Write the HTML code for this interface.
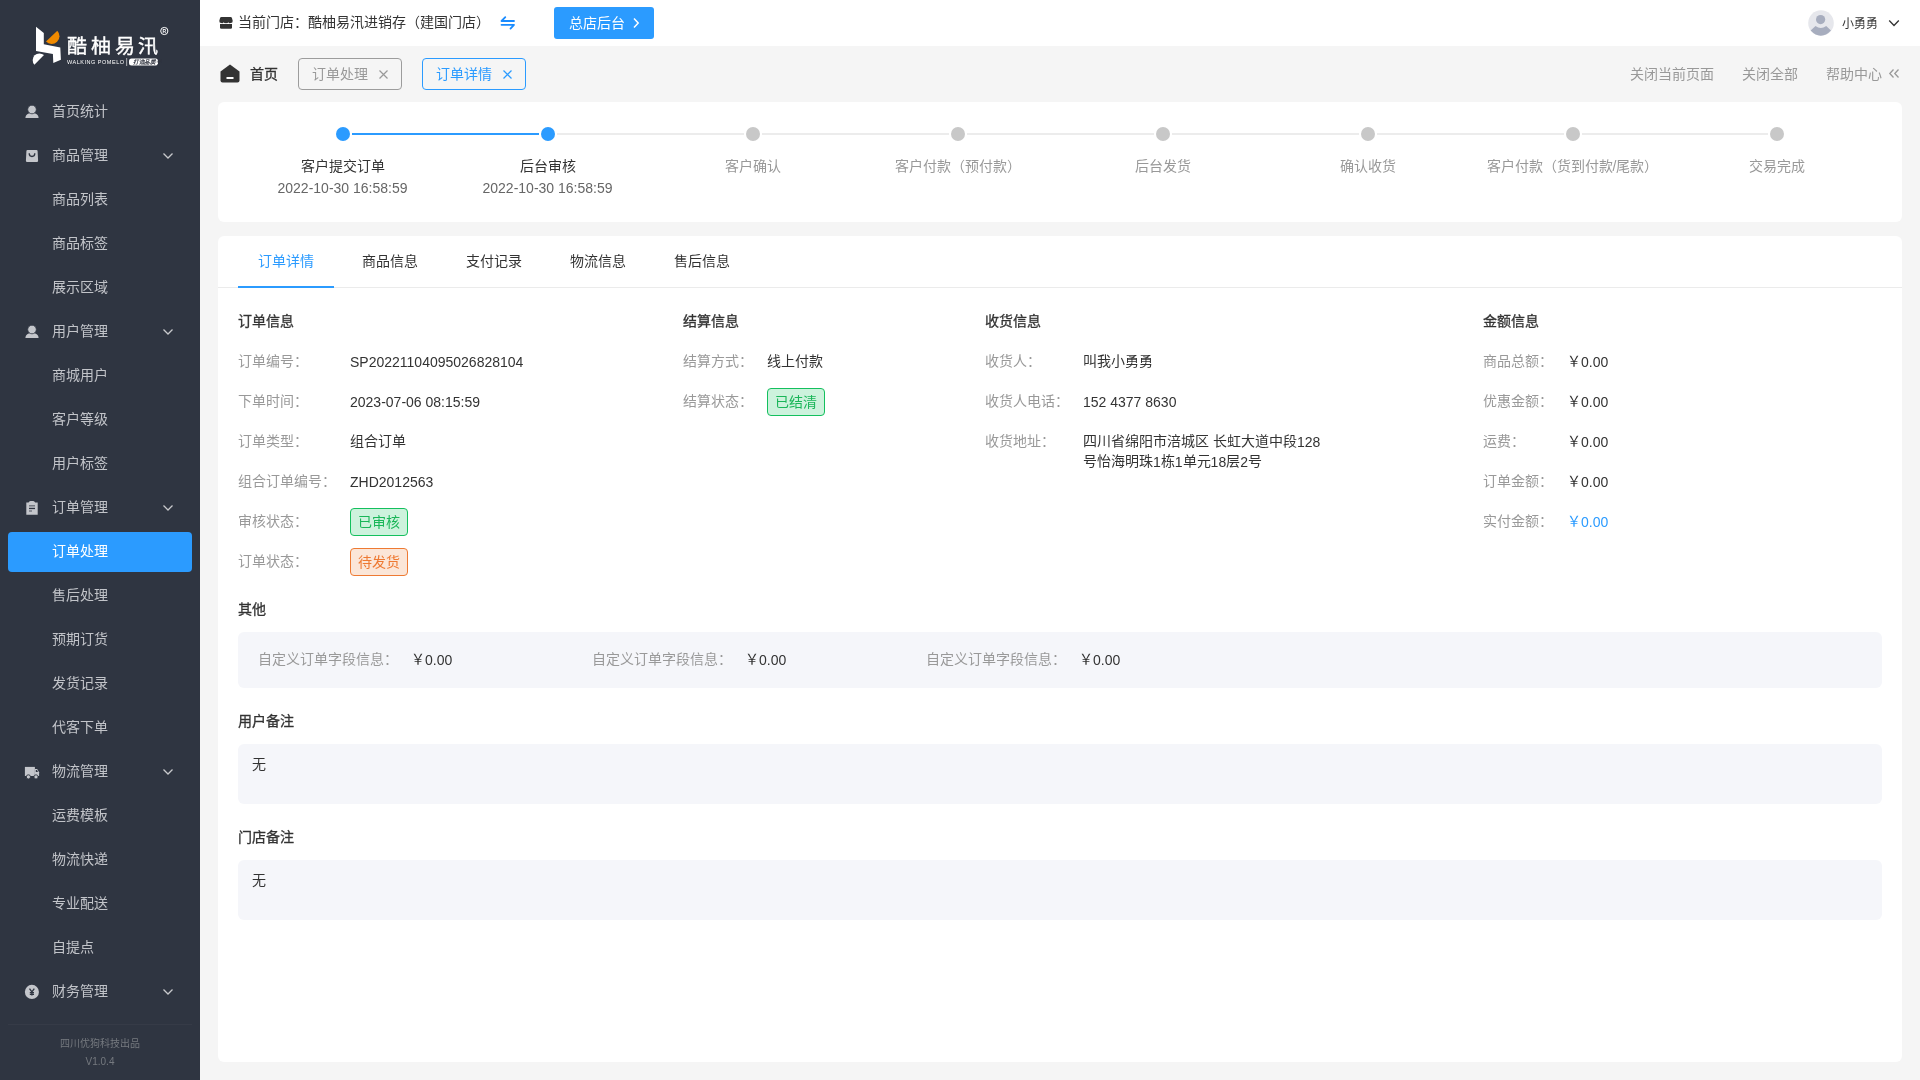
<!DOCTYPE html>
<html lang="zh-CN">
<head>
<meta charset="utf-8">
<style>
*{box-sizing:border-box;margin:0;padding:0}
html,body{width:1920px;height:1080px;overflow:hidden;background:#f5f5f5;font-family:"Liberation Sans",sans-serif;font-size:14px;color:#333}
.abs{position:absolute}
#root{position:absolute;left:0;top:0;width:1920px;height:1080px;will-change:transform}
#side{position:absolute;left:0;top:0;width:200px;height:1080px;background:#2f3541}
.mi{position:absolute;left:52px;height:20px;line-height:20px;font-size:14px;color:#c2c4c9;white-space:nowrap}
.ico{position:absolute;left:25px;width:14px;height:14px}
.chev{position:absolute;left:162px;width:12px;height:8px}
#hdr{position:absolute;left:200px;top:0;width:1720px;height:46px;background:#fff}
.t{position:absolute;white-space:nowrap;line-height:20px;height:20px}
.card{position:absolute;background:#fff;border-radius:6px}
.lab{color:#999}
.val{color:#333}
.n{position:relative;top:1px}
.sec{font-weight:400;color:#333;-webkit-text-stroke:0.3px #333}
.badge{position:absolute;height:28px;line-height:26px;border-radius:4px;font-size:14px;text-align:center}
.gbox{position:absolute;background:#f5f6f9;border-radius:4px;left:20px;width:1644px}
</style>
</head>
<body>
<div id="root">
<div id="side">
<svg class="abs" style="left:0;top:0" width="200" height="80" viewBox="0 0 200 80">
<path d="M36 26.7 L43.8 32.9 L43.8 44.2 L60.3 47.4 L60.9 59.8 L53.3 62.9 L52.9 54 L36 50.9 Z" fill="#fff"/>
<path d="M46 41.6 L57.3 30.7 A7.85 7.85 0 0 1 46 41.6 Z" fill="#f08a00"/>
<path d="M44 55.1 L34.4 64.7 A6.8 6.8 0 0 1 44 55.1 Z" fill="#fff"/>
<circle cx="164.3" cy="31" r="3.6" fill="none" stroke="#fff" stroke-width="1"/>
<text x="162.6" y="33.2" font-size="5" fill="#fff" font-family="Liberation Sans" font-weight="bold">R</text>
<rect x="129" y="58.5" width="29" height="7" rx="2.5" fill="#fff"/>
<rect x="126.5" y="58" width="0.6" height="8" fill="#fff"/>
</svg>
<div class="abs" style="left:67px;top:31px;font-size:20px;line-height:30px;color:#fff;letter-spacing:3.8px;-webkit-text-stroke:0.4px #fff;transform:scaleY(0.94);transform-origin:0 15px;white-space:nowrap">酷柚易汛</div>
<div class="abs" style="left:67px;top:58px;font-size:5.5px;line-height:8px;color:#fff;letter-spacing:0.52px;white-space:nowrap">WALKING POMELO</div>
<div class="abs" style="left:133px;top:58px;font-size:5.5px;line-height:8px;color:#30343f;font-style:italic;letter-spacing:-0.3px;white-space:nowrap;-webkit-text-stroke:0.2px #30343f">打造品质子</div>
<div class="abs" style="left:8px;top:1024px;width:184px;height:1px;background:#363b47"></div>
<div class="abs" style="left:0;top:1037px;width:200px;text-align:center;font-size:10px;line-height:14px;color:#75797f">四川优狗科技出品</div>
<div class="abs" style="left:0;top:1055px;width:200px;text-align:center;font-size:10px;line-height:14px;color:#75797f">V1.0.4</div>
<svg class="ico" style="top:103px;left:24px;width:16px;height:16px" viewBox="0 0 16 16"><path d="M1.4 15 C1.6 11.8 4 10 8 10 C12 10 14.4 11.8 14.6 15 Z" fill="#c4c6cb"/><circle cx="8" cy="6.5" r="4.3" fill="#c4c6cb" stroke="#2f3541" stroke-width="0.8"/></svg>
<div class="mi" style="top:101px">首页统计</div>
<svg class="ico" style="top:147px;left:24px;width:16px;height:16px" viewBox="0 0 16 16"><path d="M3.6 3 H12.4 A1.2 1.2 0 0 1 13.6 4.1 L14.1 13.8 A1.2 1.2 0 0 1 12.9 15 H3.1 A1.2 1.2 0 0 1 1.9 13.8 L2.4 4.1 A1.2 1.2 0 0 1 3.6 3 Z" fill="#c4c6cb"/><path d="M5.2 6.3 A2.8 3.2 0 0 0 10.8 6.3" stroke="#2f3541" stroke-width="1.3" fill="none"/></svg>
<div class="mi" style="top:145px">商品管理</div>
<svg class="chev" style="top:152px" viewBox="0 0 12 8"><path d="M1.5 1.5 L6 6 L10.5 1.5" stroke="#c8c9cc" stroke-width="1.3" fill="none"/></svg>
<div class="mi" style="top:189px">商品列表</div>
<div class="mi" style="top:233px">商品标签</div>
<div class="mi" style="top:277px">展示区域</div>
<svg class="ico" style="top:323px;left:24px;width:16px;height:16px" viewBox="0 0 16 16"><path d="M1.4 15 C1.6 11.8 4 10 8 10 C12 10 14.4 11.8 14.6 15 Z" fill="#c4c6cb"/><circle cx="8" cy="6.5" r="4.3" fill="#c4c6cb" stroke="#2f3541" stroke-width="0.8"/></svg>
<div class="mi" style="top:321px">用户管理</div>
<svg class="chev" style="top:328px" viewBox="0 0 12 8"><path d="M1.5 1.5 L6 6 L10.5 1.5" stroke="#c8c9cc" stroke-width="1.3" fill="none"/></svg>
<div class="mi" style="top:365px">商城用户</div>
<div class="mi" style="top:409px">客户等级</div>
<div class="mi" style="top:453px">用户标签</div>
<svg class="ico" style="top:499px;left:24px;width:16px;height:16px" viewBox="0 0 16 16"><path d="M2.3 3.6 H4.6 Q5.1 2.1 6.5 2.1 H9.2 Q10.6 2.1 11.1 3.6 H13.7 V15.7 H2.3 Z" fill="#c4c6cb"/><rect x="5" y="6.1" width="6" height="1.4" fill="#6f737c"/><rect x="5" y="8.8" width="6" height="1.3" fill="#2f3541"/><rect x="5" y="11.3" width="3" height="1.4" fill="#6f737c"/></svg>
<div class="mi" style="top:497px">订单管理</div>
<svg class="chev" style="top:504px" viewBox="0 0 12 8"><path d="M1.5 1.5 L6 6 L10.5 1.5" stroke="#c8c9cc" stroke-width="1.3" fill="none"/></svg>
<div class="abs" style="left:8px;top:532px;width:184px;height:40px;background:#2b9bff;border-radius:4px"></div>
<div class="mi" style="top:541px;color:#fff">订单处理</div>
<div class="mi" style="top:585px">售后处理</div>
<div class="mi" style="top:629px">预期订货</div>
<div class="mi" style="top:673px">发货记录</div>
<div class="mi" style="top:717px">代客下单</div>
<svg class="ico" style="top:763px;left:24px;width:16px;height:16px" viewBox="0 0 16 16"><path d="M0.9 3.9 H10.9 V13 H0.9 Z" fill="#c4c6cb"/><path d="M11 6.1 H13.2 L15.1 9.2 V13 H11 Z" fill="#c4c6cb"/><path d="M11.8 7.1 H13 L14 9 H11.8 Z" fill="#2f3541"/><circle cx="4.4" cy="13.9" r="2.1" fill="#c4c6cb" stroke="#2f3541" stroke-width="0.9"/><circle cx="12" cy="13.9" r="2.1" fill="#c4c6cb" stroke="#2f3541" stroke-width="0.9"/></svg>
<div class="mi" style="top:761px">物流管理</div>
<svg class="chev" style="top:768px" viewBox="0 0 12 8"><path d="M1.5 1.5 L6 6 L10.5 1.5" stroke="#c8c9cc" stroke-width="1.3" fill="none"/></svg>
<div class="mi" style="top:805px">运费模板</div>
<div class="mi" style="top:849px">物流快递</div>
<div class="mi" style="top:893px">专业配送</div>
<div class="mi" style="top:937px">自提点</div>
<svg class="ico" style="top:983px;left:24px;width:16px;height:16px" viewBox="0 0 16 16"><circle cx="7.9" cy="8.9" r="7.05" fill="#c4c6cb"/><path d="M5.5 5.6 L7.9 8.9 L10.3 5.6 M7.9 8.9 V12.6 M5.8 9.7 H10 M5.8 11.3 H10" stroke="#2f3541" stroke-width="1.3" fill="none"/></svg>
<div class="mi" style="top:981px">财务管理</div>
<svg class="chev" style="top:988px" viewBox="0 0 12 8"><path d="M1.5 1.5 L6 6 L10.5 1.5" stroke="#c8c9cc" stroke-width="1.3" fill="none"/></svg>
</div>
<div id="hdr">
<svg class="abs" style="left:19px;top:16px" width="14" height="14" viewBox="0 0 14 14"><path d="M2.5 1 H11.5 A1.5 1.5 0 0 1 13 2.2 L13.7 4.8 A2 2 0 0 1 11.6 7 A1.9 1.9 0 0 1 9.3 6.2 A2 2 0 0 1 7 7 A2 2 0 0 1 4.7 6.2 A1.9 1.9 0 0 1 2.4 7 A2 2 0 0 1 0.3 4.8 L1 2.2 A1.5 1.5 0 0 1 2.5 1 Z" fill="#333"/><path d="M1 8 H13 V11.5 A1.3 1.3 0 0 1 11.7 12.8 H2.3 A1.3 1.3 0 0 1 1 11.5 Z" fill="#333"/></svg>
<div class="t" style="left:38px;top:12px;color:#333">当前门店：酷柚易汛进销存（建国门店）</div>
<svg class="abs" style="left:298px;top:14px" width="18" height="17" viewBox="0 0 18 17"><path d="M16 7 H3.5 L7.3 3.2" stroke="#1a8cff" stroke-width="1.8" stroke-linecap="round" stroke-linejoin="round" fill="none"/><path d="M3.5 10.8 H16 L12.5 14.6" stroke="#1a8cff" stroke-width="1.8" stroke-linecap="round" stroke-linejoin="round" fill="none"/></svg>
<div class="abs" style="left:354px;top:7px;width:100px;height:32px;background:#2b9bff;border-radius:3px"></div>
<div class="t" style="left:369px;top:13px;color:#fff">总店后台</div>
<svg class="abs" style="left:432px;top:17px" width="8" height="12" viewBox="0 0 8 12"><path d="M2 1.5 L6.2 6 L2 10.5" stroke="#fff" stroke-width="1.5" fill="none"/></svg>
<svg class="abs" style="left:1608px;top:10px" width="26" height="26" viewBox="0 0 26 26"><circle cx="13" cy="13" r="12.8" fill="#e6e7ec"/><circle cx="12.6" cy="9.6" r="4.6" fill="#a7adbe"/><path d="M2.6 20.5 L7.5 16 Q12.8 20 18.2 16 L23 20.5 Q18 25.7 12.8 25.7 Q7.6 25.7 2.6 20.5 Z" fill="#a7adbe"/></svg>
<div class="t" style="left:1642px;top:14px;font-size:12px;color:#333">小勇勇</div>
<svg class="abs" style="left:1688px;top:19px" width="12" height="9" viewBox="0 0 12 9"><path d="M1.2 1.5 L6 6.5 L10.8 1.5" stroke="#333" stroke-width="1.3" fill="none"/></svg>
</div>
<svg class="abs" style="left:220px;top:64px" width="20" height="19" viewBox="0 0 20 19"><path d="M10 0.5 L19.5 7.5 V16.5 A2 2 0 0 1 17.5 18.5 H2.5 A2 2 0 0 1 0.5 16.5 V7.5 Z" fill="#333"/><rect x="6.5" y="13" width="7" height="2" fill="#fff"/></svg>
<div class="t" style="left:250px;top:64px;color:#333;-webkit-text-stroke:0.3px #333">首页</div>
<div class="abs" style="left:298px;top:58px;width:104px;height:32px;border:1px solid #9c9c9c;border-radius:4px"></div>
<div class="t" style="left:312px;top:64px;color:#999">订单处理</div>
<svg class="abs" style="left:378px;top:69px" width="11" height="11" viewBox="0 0 11 11"><path d="M1.5 1.5 L9.5 9.5 M9.5 1.5 L1.5 9.5" stroke="#999" stroke-width="1.2"/></svg>
<div class="abs" style="left:422px;top:58px;width:104px;height:32px;border:1px solid #2b9bff;border-radius:4px"></div>
<div class="t" style="left:436px;top:64px;color:#2b9bff">订单详情</div>
<svg class="abs" style="left:502px;top:69px" width="11" height="11" viewBox="0 0 11 11"><path d="M1.5 1.5 L9.5 9.5 M9.5 1.5 L1.5 9.5" stroke="#2b9bff" stroke-width="1.2"/></svg>
<div class="t" style="left:1630px;top:64px;color:#999">关闭当前页面</div>
<div class="t" style="left:1742px;top:64px;color:#999">关闭全部</div>
<div class="t" style="left:1826px;top:64px;color:#999">帮助中心</div>
<svg class="abs" style="left:1888px;top:68px" width="12" height="11" viewBox="0 0 12 11"><path d="M5.5 1.5 L1.8 5.5 L5.5 9.5 M10.5 1.5 L6.8 5.5 L10.5 9.5" stroke="#999" stroke-width="1.3" fill="none"/></svg>
<div class="card" style="left:218px;top:102px;width:1684px;height:120px"></div>
<div class="abs" style="left:335.5px;top:127px;width:14px;height:14px;border-radius:50%;background:#2b9bff"></div>
<div class="abs" style="left:351.5px;top:133px;width:187.0px;height:2px;background:#2b9bff"></div>
<div class="t" style="left:192.5px;width:300px;text-align:center;top:156px;color:#333">客户提交订单</div>
<div class="t" style="left:192.5px;width:300px;text-align:center;top:177px;color:#666"><span class="n">2022-10-30 16:58:59</span></div>
<div class="abs" style="left:540.5px;top:127px;width:14px;height:14px;border-radius:50%;background:#2b9bff"></div>
<div class="abs" style="left:556.5px;top:133px;width:187.0px;height:2px;background:#ececec"></div>
<div class="t" style="left:397.5px;width:300px;text-align:center;top:156px;color:#333">后台审核</div>
<div class="t" style="left:397.5px;width:300px;text-align:center;top:177px;color:#666"><span class="n">2022-10-30 16:58:59</span></div>
<div class="abs" style="left:745.5px;top:127px;width:14px;height:14px;border-radius:50%;background:#c8c8c8"></div>
<div class="abs" style="left:761.5px;top:133px;width:187.0px;height:2px;background:#ececec"></div>
<div class="t" style="left:602.5px;width:300px;text-align:center;top:156px;color:#999">客户确认</div>
<div class="abs" style="left:950.5px;top:127px;width:14px;height:14px;border-radius:50%;background:#c8c8c8"></div>
<div class="abs" style="left:966.5px;top:133px;width:187.0px;height:2px;background:#ececec"></div>
<div class="t" style="left:807.5px;width:300px;text-align:center;top:156px;color:#999">客户付款（预付款）</div>
<div class="abs" style="left:1155.5px;top:127px;width:14px;height:14px;border-radius:50%;background:#c8c8c8"></div>
<div class="abs" style="left:1171.5px;top:133px;width:187.0px;height:2px;background:#ececec"></div>
<div class="t" style="left:1012.5px;width:300px;text-align:center;top:156px;color:#999">后台发货</div>
<div class="abs" style="left:1360.5px;top:127px;width:14px;height:14px;border-radius:50%;background:#c8c8c8"></div>
<div class="abs" style="left:1376.5px;top:133px;width:187.0px;height:2px;background:#ececec"></div>
<div class="t" style="left:1217.5px;width:300px;text-align:center;top:156px;color:#999">确认收货</div>
<div class="abs" style="left:1565.5px;top:127px;width:14px;height:14px;border-radius:50%;background:#c8c8c8"></div>
<div class="abs" style="left:1581.5px;top:133px;width:186.0px;height:2px;background:#ececec"></div>
<div class="t" style="left:1422.5px;width:300px;text-align:center;top:156px;color:#999">客户付款（货到付款/尾款）</div>
<div class="abs" style="left:1769.5px;top:127px;width:14px;height:14px;border-radius:50%;background:#c8c8c8"></div>
<div class="t" style="left:1626.5px;width:300px;text-align:center;top:156px;color:#999">交易完成</div>
<div class="card" style="left:218px;top:236px;width:1684px;height:826px"></div>
<div class="abs" style="left:218px;top:287px;width:1684px;height:1px;background:#ebebeb"></div>
<div class="t" style="left:258px;top:251px;color:#2b9bff">订单详情</div>
<div class="t" style="left:362px;top:251px;color:#333">商品信息</div>
<div class="t" style="left:466px;top:251px;color:#333">支付记录</div>
<div class="t" style="left:570px;top:251px;color:#333">物流信息</div>
<div class="t" style="left:674px;top:251px;color:#333">售后信息</div>
<div class="abs" style="left:238px;top:286px;width:96px;height:2px;background:#2b9bff"></div>
<div class="t sec" style="left:238px;top:311px">订单信息</div>
<div class="t lab" style="left:238px;top:351px">订单编号：</div>
<div class="t" style="left:350px;top:351px;color:#333"><span class="n">SP20221104095026828104</span></div>
<div class="t lab" style="left:238px;top:391px">下单时间：</div>
<div class="t" style="left:350px;top:391px;color:#333"><span class="n">2023-07-06 08:15:59</span></div>
<div class="t lab" style="left:238px;top:431px">订单类型：</div>
<div class="t" style="left:350px;top:431px;color:#333">组合订单</div>
<div class="t lab" style="left:238px;top:471px">组合订单编号：</div>
<div class="t" style="left:350px;top:471px;color:#333"><span class="n">ZHD2012563</span></div>
<div class="t lab" style="left:238px;top:511px">审核状态：</div>
<div class="badge" style="left:350px;top:508px;width:58px;background:#cdf2dd;border:1px solid #14c05e;color:#19b658">已审核</div>
<div class="t lab" style="left:238px;top:551px">订单状态：</div>
<div class="badge" style="left:350px;top:548px;width:58px;background:#fbe6d8;border:1px solid #ee7a33;color:#ee7932">待发货</div>
<div class="t sec" style="left:683px;top:311px">结算信息</div>
<div class="t lab" style="left:683px;top:351px">结算方式：</div>
<div class="t" style="left:767px;top:351px;color:#333">线上付款</div>
<div class="t lab" style="left:683px;top:391px">结算状态：</div>
<div class="badge" style="left:767px;top:388px;width:58px;background:#cdf2dd;border:1px solid #14c05e;color:#19b658">已结清</div>
<div class="t sec" style="left:985px;top:311px">收货信息</div>
<div class="t lab" style="left:985px;top:351px">收货人：</div>
<div class="t" style="left:1083px;top:351px;color:#333">叫我小勇勇</div>
<div class="t lab" style="left:985px;top:391px">收货人电话：</div>
<div class="t" style="left:1083px;top:391px;color:#333"><span class="n">152 4377 8630</span></div>
<div class="t lab" style="left:985px;top:431px">收货地址：</div>
<div class="t" style="left:1083px;top:431px;color:#333">四川省绵阳市涪城区 长虹大道中段<span class="n">128</span></div>
<div class="t" style="left:1083px;top:451px;color:#333">号怡海明珠<span class="n">1</span>栋<span class="n">1</span>单元<span class="n">18</span>层<span class="n">2</span>号</div>
<div class="t sec" style="left:1483px;top:311px">金额信息</div>
<div class="t lab" style="left:1483px;top:351px">商品总额：</div>
<div class="t" style="left:1567px;top:351px;color:#333">￥<span class="n">0.00</span></div>
<div class="t lab" style="left:1483px;top:391px">优惠金额：</div>
<div class="t" style="left:1567px;top:391px;color:#333">￥<span class="n">0.00</span></div>
<div class="t lab" style="left:1483px;top:431px">运费：</div>
<div class="t" style="left:1567px;top:431px;color:#333">￥<span class="n">0.00</span></div>
<div class="t lab" style="left:1483px;top:471px">订单金额：</div>
<div class="t" style="left:1567px;top:471px;color:#333">￥<span class="n">0.00</span></div>
<div class="t lab" style="left:1483px;top:511px">实付金额：</div>
<div class="t" style="left:1567px;top:511px;color:#2b9bff">￥<span class="n">0.00</span></div>
<div class="t sec" style="left:238px;top:599px">其他</div>
<div class="abs" style="left:238px;top:632px;width:1644px;height:56px;background:#f5f6fa;border-radius:6px"></div>
<div class="t lab" style="left:258px;top:649px">自定义订单字段信息：</div>
<div class="t" style="left:411px;top:649px;color:#333">￥<span class="n">0.00</span></div>
<div class="t lab" style="left:592px;top:649px">自定义订单字段信息：</div>
<div class="t" style="left:745px;top:649px;color:#333">￥<span class="n">0.00</span></div>
<div class="t lab" style="left:926px;top:649px">自定义订单字段信息：</div>
<div class="t" style="left:1079px;top:649px;color:#333">￥<span class="n">0.00</span></div>
<div class="t sec" style="left:238px;top:711px">用户备注</div>
<div class="abs" style="left:238px;top:744px;width:1644px;height:60px;background:#f5f6fa;border-radius:6px"></div>
<div class="t" style="left:252px;top:754px;color:#333">无</div>
<div class="t sec" style="left:238px;top:827px">门店备注</div>
<div class="abs" style="left:238px;top:860px;width:1644px;height:60px;background:#f5f6fa;border-radius:6px"></div>
<div class="t" style="left:252px;top:870px;color:#333">无</div>
</div>
</body>
</html>
